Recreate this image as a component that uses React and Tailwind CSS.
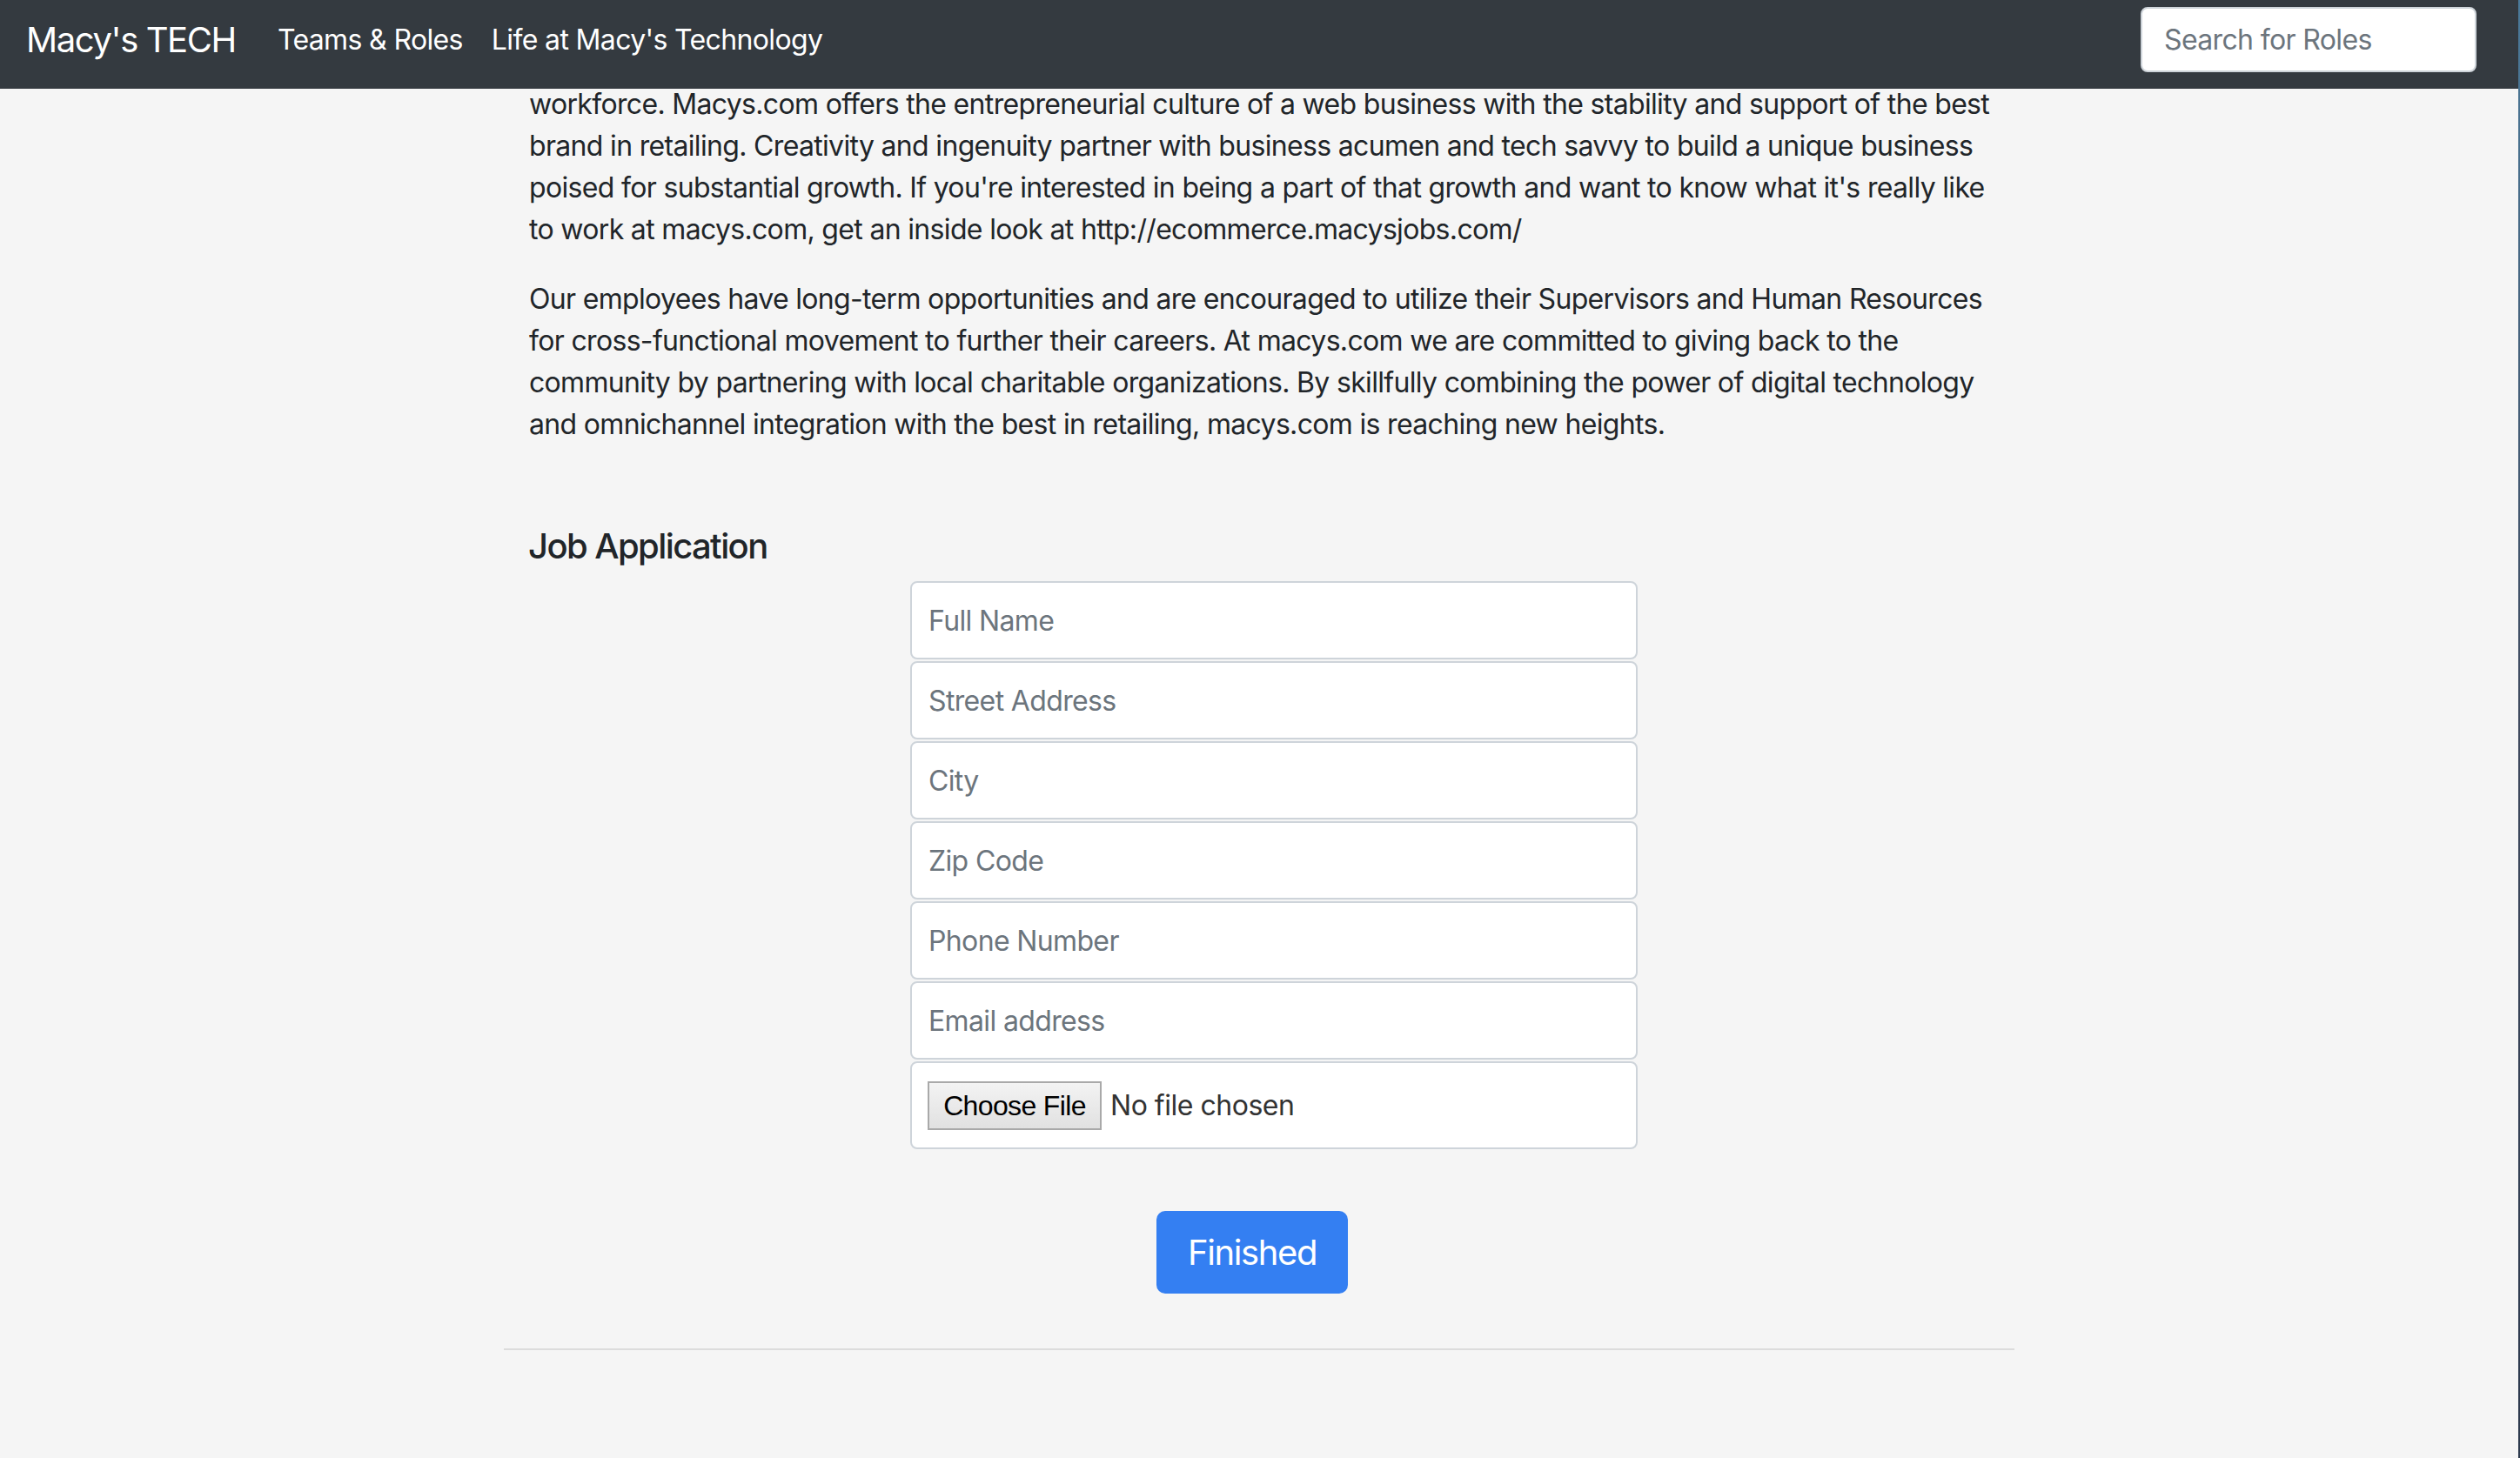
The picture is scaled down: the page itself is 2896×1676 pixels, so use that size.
import React from "react";

const fieldNames = ["Full Name", "Street Address", "City", "Zip Code", "Phone Number", "Email address"];

export default function App() {
  return (
    <div className="flex w-full min-h-screen bg-[#f5f5f5]" style={{ fontFamily: "Inter, 'Noto Sans', sans-serif" }}>
      <div className="flex-1 min-w-0 flex flex-col">
        <nav className="sticky top-0 z-10 h-[102px] bg-[#343a40] flex items-center pb-[11px] pl-[30px] pr-[48px]">
          <span className="text-white text-[40px] leading-none tracking-[-0.035em] mr-[48px]">Macy's TECH</span>
          <span className="text-white text-[32px] leading-none tracking-[-0.02em] mr-[33px]">Teams &amp; Roles</span>
          <span className="text-white text-[32px] leading-none tracking-[-0.02em]">Life at Macy's Technology</span>
          <div className="flex-1" />
          <input
            className="w-[386px] h-[75px] rounded-[8px] border-2 border-[#ced4da] bg-white pl-[25px] text-[32px] tracking-[-0.02em] text-[#495057] placeholder:text-[#6c757d] outline-none"
            placeholder="Search for Roles"
          />
        </nav>
        <main className="w-[1736px] mx-auto -mt-[6px] flex flex-col text-[#212529]">
          <div className="pl-[29px] pr-[30px] text-[32px] leading-[48px] tracking-[-0.021em] whitespace-nowrap">
            <p className="mb-[32px]">
              workforce. Macys.com offers the entrepreneurial culture of a web business with the stability and support of the best<br />
              brand in retailing. Creativity and ingenuity partner with business acumen and tech savvy to build a unique business<br />
              poised for substantial growth. If you're interested in being a part of that growth and want to know what it's really like<br />
              to work at macys.com, get an inside look at http://ecommerce.macysjobs.com/
            </p>
            <p>
              Our employees have long-term opportunities and are encouraged to utilize their Supervisors and Human Resources<br />
              for cross-functional movement to further their careers. At macys.com we are committed to giving back to the<br />
              community by partnering with local charitable organizations. By skillfully combining the power of digital technology<br />
              and omnichannel integration with the best in retailing, macys.com is reaching new heights.
            </p>
            <h5 className="mt-[92px] -ml-[1px] text-[40px] leading-[48px] font-medium tracking-[-0.04em]">Job Application</h5>
          </div>
          <div className="ml-[467px] w-[836px] mt-[16px] flex flex-col gap-[2px]">
            {fieldNames.map((n) => (
              <input
                key={n}
                className="h-[90px] w-full rounded-[8px] border-2 border-[#ced4da] bg-white pl-[19px] text-[32px] tracking-[-0.02em] text-[#495057] placeholder:text-[#6c757d] outline-none"
                placeholder={n}
              />
            ))}
            <div className="h-[101px] w-full rounded-[8px] border-2 border-[#ced4da] bg-white pl-[18px] flex items-center">
              <span
                className="h-[56px] w-[200px] flex items-center justify-center border-2 border-[#a9a9a9] bg-gradient-to-b from-[#f3f3f3] to-[#e1e1e1] text-black text-[32px] tracking-[-0.02em]"
                style={{ fontFamily: "'Liberation Sans', Arial, sans-serif" }}
              >
                Choose File
              </span>
              <span className="ml-[10px] text-[#333] text-[32px] tracking-[-0.015em]">
                No file chosen
              </span>
            </div>
          </div>
          <button className="ml-[750px] mt-[71px] w-[220px] h-[95px] rounded-[10px] bg-[#347ff2] text-white text-[40px] tracking-[-0.035em]">
            Finished
          </button>
          <hr className="mt-[63px] border-0 h-[2px] bg-[#dcdcdc]" />
        </main>
      </div>
      <div className="w-[2px] min-h-screen bg-gradient-to-b from-[#4b7a9a] via-[#3f4a5e] to-[#2d3a4e]" />
    </div>
  );
}
